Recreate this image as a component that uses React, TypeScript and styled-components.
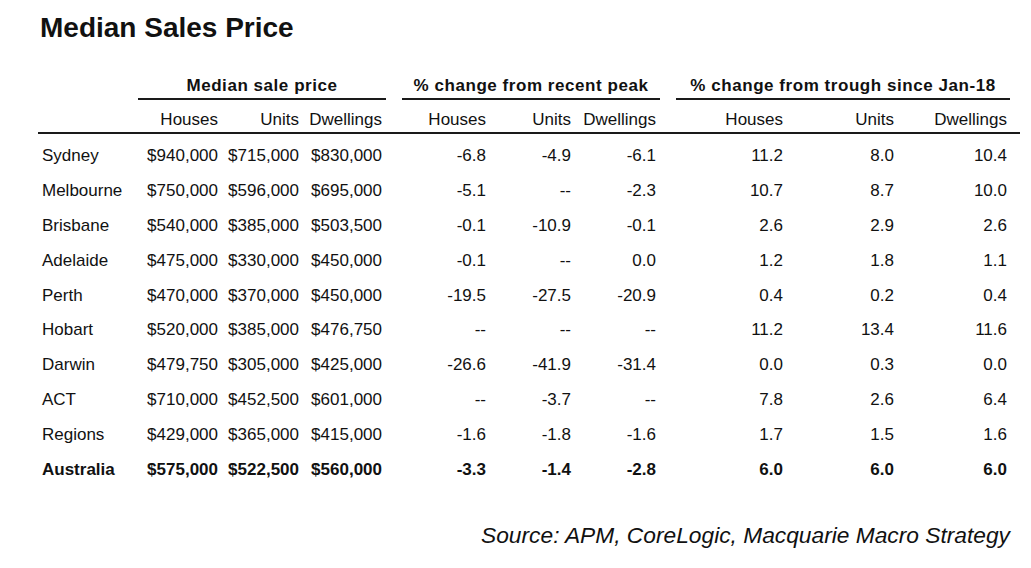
import styled, { createGlobalStyle } from "styled-components";

const GlobalStyle = createGlobalStyle`
  body {
    margin: 0;
    background: #fff;
    color: #111;
    font-family: "Liberation Sans", Arial, sans-serif;
  }
`;

// right edges of columns taken from the source layout
const COLUMNS = "100px 80px 81px 83px 104px 85px 85px 127px 111px 113px 13px";

const Page = styled.div`
  width: 1031px;
  height: 568px;
  padding-top: 12px;
  box-sizing: border-box;
  overflow: hidden;
`;

const Title = styled.h1`
  margin: 0 0 0 40px;
  font-size: 28px;
  line-height: 32px;
  font-weight: 700;
`;

const Table = styled.div`
  margin: 32px 0 0 38px;
  width: 982px;
`;

const GroupRow = styled.div`
  display: grid;
  grid-template-columns: ${COLUMNS};
`;

const Group = styled.div<{ $start: number; $left: number; $right: number }>`
  grid-column: ${(p) => p.$start} / span 3;
  margin-left: ${(p) => p.$left}px;
  margin-right: ${(p) => p.$right}px;
  text-align: center;
  font-size: 17px;
  line-height: 20px;
  font-weight: 700;
  letter-spacing: 0.55px;
  padding-bottom: 2px;
  border-bottom: 2px solid #1a1a1a;
`;

const HeadRow = styled.div`
  display: grid;
  grid-template-columns: ${COLUMNS};
  margin-top: 10px;
  height: 22px;
  border-bottom: 2px solid #1a1a1a;
  font-size: 17px;
  line-height: 20px;
`;

const Body = styled.div`
  margin-top: 5px;
`;

const Row = styled.div<{ $bold?: boolean }>`
  display: grid;
  grid-template-columns: ${COLUMNS};
  height: 34.9px;
  font-size: 17px;
  line-height: 34.9px;
  font-weight: ${(p) => (p.$bold ? 700 : 400)};
`;

const Label = styled.div`
  padding-left: 4px;
  white-space: nowrap;
`;

const Cell = styled.div`
  text-align: right;
  white-space: nowrap;
`;

const Source = styled.div`
  margin: 33px 21px 0 0;
  text-align: right;
  font-style: italic;
  font-size: 22.75px;
  line-height: 28px;
`;

const SUB = ["Houses", "Units", "Dwellings"];

const rows: { name: string; bold?: boolean; values: string[] }[] = [
  { name: "Sydney", values: ["$940,000", "$715,000", "$830,000", "-6.8", "-4.9", "-6.1", "11.2", "8.0", "10.4"] },
  { name: "Melbourne", values: ["$750,000", "$596,000", "$695,000", "-5.1", "--", "-2.3", "10.7", "8.7", "10.0"] },
  { name: "Brisbane", values: ["$540,000", "$385,000", "$503,500", "-0.1", "-10.9", "-0.1", "2.6", "2.9", "2.6"] },
  { name: "Adelaide", values: ["$475,000", "$330,000", "$450,000", "-0.1", "--", "0.0", "1.2", "1.8", "1.1"] },
  { name: "Perth", values: ["$470,000", "$370,000", "$450,000", "-19.5", "-27.5", "-20.9", "0.4", "0.2", "0.4"] },
  { name: "Hobart", values: ["$520,000", "$385,000", "$476,750", "--", "--", "--", "11.2", "13.4", "11.6"] },
  { name: "Darwin", values: ["$479,750", "$305,000", "$425,000", "-26.6", "-41.9", "-31.4", "0.0", "0.3", "0.0"] },
  { name: "ACT", values: ["$710,000", "$452,500", "$601,000", "--", "-3.7", "--", "7.8", "2.6", "6.4"] },
  { name: "Regions", values: ["$429,000", "$365,000", "$415,000", "-1.6", "-1.8", "-1.6", "1.7", "1.5", "1.6"] },
  { name: "Australia", bold: true, values: ["$575,000", "$522,500", "$560,000", "-3.3", "-1.4", "-2.8", "6.0", "6.0", "6.0"] },
];

export default function App() {
  return (
    <Page>
      <GlobalStyle />
      <Title>Median Sales Price</Title>
      <Table>
        <GroupRow>
          <Group $start={2} $left={0} $right={-4}>Median sale price</Group>
          <Group $start={5} $left={20} $right={-4}>% change from recent peak</Group>
          <Group $start={8} $left={20} $right={-3}>% change from trough since Jan-18</Group>
        </GroupRow>
        <HeadRow>
          <div />
          {[0, 1, 2].map((g) =>
            SUB.map((s) => <Cell key={g + s}>{s}</Cell>)
          )}
        </HeadRow>
        <Body>
          {rows.map((r) => (
            <Row key={r.name} $bold={r.bold}>
              <Label>{r.name}</Label>
              {r.values.map((v, i) => (
                <Cell key={i}>{v}</Cell>
              ))}
            </Row>
          ))}
        </Body>
      </Table>
      <Source>Source: APM, CoreLogic, Macquarie Macro Strategy</Source>
    </Page>
  );
}
